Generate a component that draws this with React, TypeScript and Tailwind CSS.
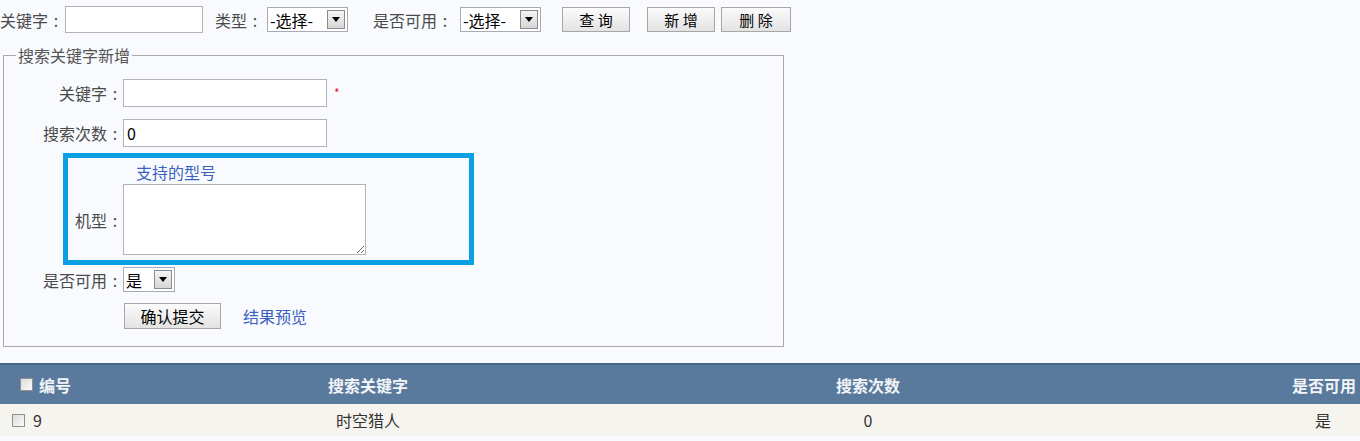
import React from 'react';

const font = "font-['Microsoft_YaHei','Noto_Sans_CJK_SC',sans-serif]";

const Label = ({ text, className = '' }: { text: string; className?: string }) => (
    <span className={`whitespace-nowrap ${className}`}>
        {text}<span className="inline-block w-[16px] text-center">:</span>
    </span>
);

const FakeSelect = ({ text, width }: { text: string; width: string }) => (
    <div className={`flex items-center h-[25px] border border-[#a5acb5] bg-white ${width}`}>
        <span className="flex-1 pl-[2px] text-[16px] text-black leading-none whitespace-nowrap">{text}</span>
        <span className="flex items-center justify-center w-[18px] h-[19px] mr-[2px] border border-[#8b8b8b] bg-gradient-to-b from-[#f4f4f4] to-[#d6d6d6]">
            <svg width="8" height="5" viewBox="0 0 8 5"><path d="M0 0h8L4 5z" fill="#000" /></svg>
        </span>
    </div>
);

const Btn = ({ children, className = '' }: { children: React.ReactNode; className?: string }) => (
    <button className={`h-[25px] border border-[#a7a7a7] bg-gradient-to-b from-[#fbfbfb] to-[#e3e3e3] text-[15px] text-black leading-none ${className}`}>
        {children}
    </button>
);

const Checkbox = () => (
    <span className="inline-block w-[13px] h-[13px] border border-[#8f8f8f] bg-gradient-to-br from-[#dcdcdc] to-[#fbfbfb]" />
);

const App = () => {
    const rows = [{ id: 9, keyword: '时空猎人', count: 0, enabled: '是' }];

    return (
        <div className={`w-[1360px] h-[441px] bg-[#f8fafd] text-[16px] text-[#4a4a4a] overflow-hidden ${font}`}>
            {/* search bar */}
            <div className="flex items-center h-[40px] pb-[1px]">
                <Label text="关键字" className="w-[65px]" />
                <input className="w-[138px] h-[27px] border border-[#b3b3b3] bg-white outline-none" />
                <Label text="类型" className="ml-[12px] w-[52px]" />
                <FakeSelect text="-选择-" width="w-[81px]" />
                <Label text="是否可用" className="ml-[25px] w-[87px]" />
                <FakeSelect text="-选择-" width="w-[81px]" />
                <Btn className="ml-[21px] w-[68px]">查 询</Btn>
                <Btn className="ml-[17px] w-[68px]">新 增</Btn>
                <Btn className="ml-[6px] w-[70px]">删 除</Btn>
            </div>

            {/* add form */}
            <fieldset className="ml-[3px] mt-[8px] w-[781px] h-[299px] border border-[#a9a9a9] px-0 pb-0">
                <legend className="ml-[12px] px-[2px] text-[16px] text-[#555] leading-[14px]">搜索关键字新增</legend>

                <div className="flex items-center mt-[17px]">
                    <Label text="关键字" className="w-[119px] text-right" />
                    <input className="w-[204px] h-[28px] border border-[#b3b3b3] bg-white outline-none" />
                    <span className="ml-[7px] text-[#e02020] text-[12px]">*</span>
                </div>
                <div className="flex items-center mt-[12px]">
                    <Label text="搜索次数" className="w-[119px] text-right" />
                    <div className="w-[204px] h-[28px] border border-[#b3b3b3] bg-white flex items-center pl-[3px] text-[16px] text-black">0</div>
                </div>

                <div className="ml-[59px] mt-[6px] w-[411px] h-[112px] border-[5px] border-[#0aa0e3] pt-[4px]">
                    <div className="pl-[68px] text-[#3a5fc0] leading-[20px]">支持的型号</div>
                    <div className="flex items-center mt-[2px]">
                        <Label text="机型" className="w-[55px] text-right" />
                        <textarea className="w-[243px] h-[71px] border border-[#b3b3b3] bg-white outline-none resize" />
                    </div>
                </div>

                <div className="flex items-center mt-[2px]">
                    <Label text="是否可用" className="w-[119px] text-right" />
                    <FakeSelect text="是" width="w-[52px]" />
                </div>
                <div className="flex items-center mt-[11px] ml-[120px]">
                    <Btn className="w-[97px] h-[26px] text-[16px]">确认提交</Btn>
                    <span className="ml-[22px] text-[#3a5fc0]">结果预览</span>
                </div>
            </fieldset>

            {/* list */}
            <table className="mt-[16px] w-full border-collapse">
                <thead>
                    <tr className="h-[40px] bg-[#5a7a9d] border-t-2 border-[#46658a] text-[#f2f4f7] font-bold">
                        <th className="w-[284px] text-left pl-[20px]">
                            <div className="flex items-center gap-[6px]"><Checkbox />编号</div>
                        </th>
                        <th className="w-[168px]">搜索关键字</th>
                        <th>搜索次数</th>
                        <th className="w-[76px] text-right pr-[4px] whitespace-nowrap">是否可用</th>
                    </tr>
                </thead>
                <tbody>
                    {rows.map((row) => (
                        <tr key={row.id} className="h-[32px] bg-[#f6f4ef] text-[#333]">
                            <td className="pl-[12px]">
                                <div className="flex items-center gap-[8px]"><Checkbox />{row.id}</div>
                            </td>
                            <td className="text-center">{row.keyword}</td>
                            <td className="text-center">{row.count}</td>
                            <td className="text-center pl-[2px]">{row.enabled}</td>
                        </tr>
                    ))}
                </tbody>
            </table>
        </div>
    );
};

export default App;
